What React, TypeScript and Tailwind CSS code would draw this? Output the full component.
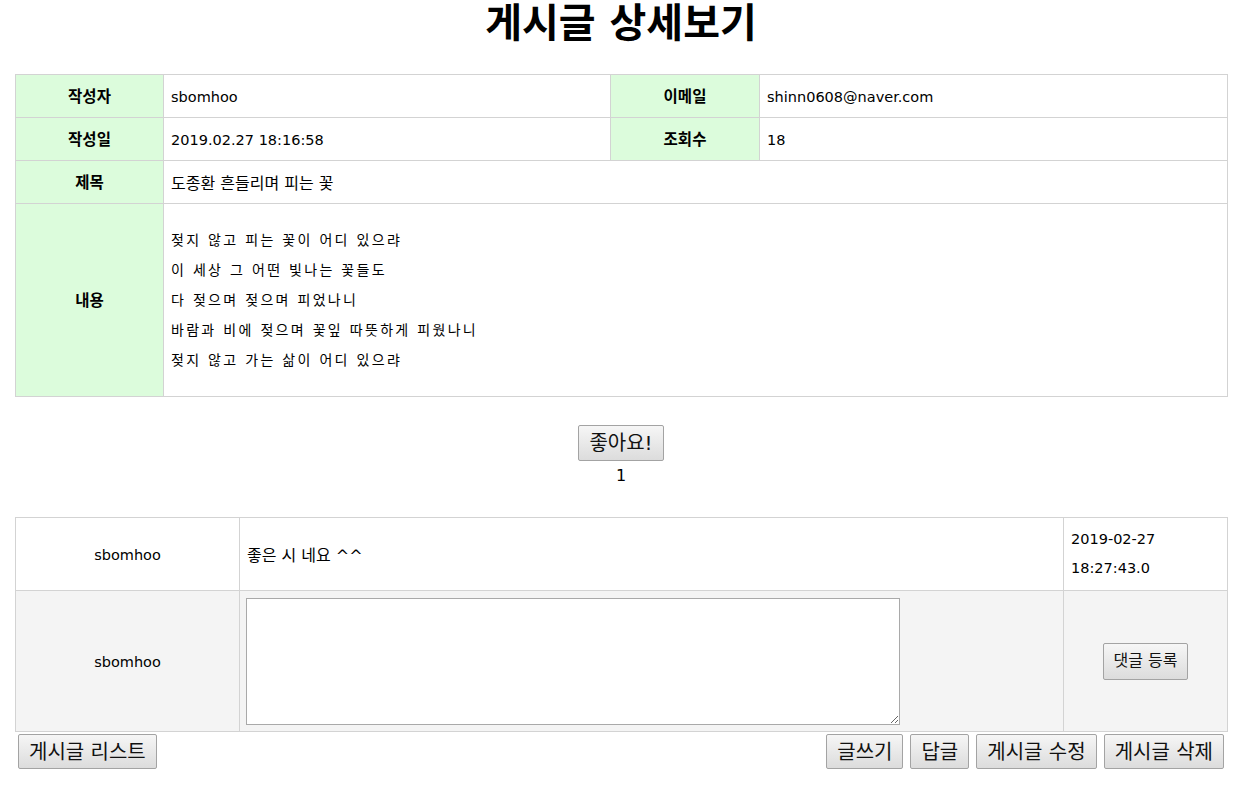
const font = '[font-family:"DejaVu_Sans","Noto_Sans_CJK_KR",sans-serif]'

const lines = [
  '젖지 않고 피는 꽃이 어디 있으랴',
  '이 세상 그 어떤 빛나는 꽃들도',
  '다 젖으며 젖으며 피었나니',
  '바람과 비에 젖으며 꽃잎 따뜻하게 피웠나니',
  '젖지 않고 가는 삶이 어디 있으랴',
]

const btn =
  'border border-[#a3a3a3] rounded-[2px] bg-gradient-to-b from-[#f6f6f6] to-[#dcdcdc] text-[#111] leading-none'

function Label({ children }: { children: React.ReactNode }) {
  return (
    <td className="border border-[#d3d3d3] bg-[#dcfcdc] pt-[4px] text-center font-bold text-[15.5px] text-black">
      {children}
    </td>
  )
}

function Value({ children, colSpan, ko }: { children: React.ReactNode; colSpan?: number; ko?: boolean }) {
  return (
    <td
      colSpan={colSpan}
      className={`border border-[#d3d3d3] px-[7px] pt-[4px] text-black ${ko ? 'text-[16px]' : 'text-[14.5px]'}`}
    >
      {children}
    </td>
  )
}

export default function App() {
  return (
    <div className={`min-h-screen w-[1242px] bg-white ${font}`}>
      {/* Title */}
      <div className="h-[74px] pt-[1px] text-center">
        <h1 className="text-[40px] font-bold leading-[44px] text-black">게시글 상세보기</h1>
      </div>

      {/* Post detail */}
      <table className="ml-[15px] w-[1212px] border-collapse table-fixed">
        <colgroup>
          <col className="w-[148px]" />
          <col className="w-[447px]" />
          <col className="w-[149px]" />
          <col className="w-[468px]" />
        </colgroup>
        <tbody>
          <tr className="h-[43px]">
            <Label>작성자</Label>
            <Value>sbomhoo</Value>
            <Label>이메일</Label>
            <Value>shinn0608@naver.com</Value>
          </tr>
          <tr className="h-[43px]">
            <Label>작성일</Label>
            <Value>2019.02.27 18:16:58</Value>
            <Label>조회수</Label>
            <Value>18</Value>
          </tr>
          <tr className="h-[43px]">
            <Label>제목</Label>
            <Value colSpan={3} ko>
              도종환 흔들리며 피는 꽃
            </Value>
          </tr>
          <tr className="h-[193px]">
            <Label>내용</Label>
            <td
              colSpan={3}
              className="border border-[#d3d3d3] px-[7px] text-[14px] leading-[30px] tracking-[2.3px] text-black"
            >
              {lines.map((l) => (
                <div key={l}>{l}</div>
              ))}
            </td>
          </tr>
        </tbody>
      </table>

      {/* Like */}
      <div className="flex flex-col items-center pt-[28px]">
        <button className={`${btn} h-[36px] px-[10px] text-[20px]`}>좋아요!</button>
        <div className="mt-[6px] text-[16px] font-medium leading-[18px] text-black">1</div>
      </div>

      {/* Comments */}
      <table className="mt-[32px] ml-[15px] w-[1212px] border-collapse table-fixed">
        <colgroup>
          <col className="w-[224px]" />
          <col className="w-[824px]" />
          <col className="w-[164px]" />
        </colgroup>
        <tbody>
          <tr className="h-[73px]">
            <td className="border border-[#d3d3d3] pt-[3px] text-center text-[14.5px] text-black">sbomhoo</td>
            <td className="border border-[#d3d3d3] px-[7px] pt-[3px] text-[16px] text-black">좋은 시 네요 ^^</td>
            <td className="border border-[#d3d3d3] px-[7px] text-[14.5px] leading-[29px] text-black">
              <div>2019-02-27</div>
              <div>18:27:43.0</div>
            </td>
          </tr>
          <tr className="h-[141px] bg-[#f4f4f4]">
            <td className="border border-[#d3d3d3] pt-[3px] text-center text-[14.5px] text-black">sbomhoo</td>
            <td className="border border-[#d3d3d3] px-[6px] align-middle">
              <textarea className="block h-[127px] w-[654px] border border-[#a9a9a9] bg-white" />
            </td>
            <td className="border border-[#d3d3d3] text-center">
              <button className={`${btn} h-[37px] px-[10px] text-[16px]`}>댓글 등록</button>
            </td>
          </tr>
        </tbody>
      </table>

      {/* Actions */}
      <div className="ml-[18px] mt-[2px] flex w-[1206px] items-start justify-between">
        <button className={`${btn} h-[35px] px-[10px] text-[20px]`}>게시글 리스트</button>
        <div className="flex gap-[7px]">
          <button className={`${btn} h-[35px] px-[10px] text-[20px]`}>글쓰기</button>
          <button className={`${btn} h-[35px] px-[10px] text-[20px]`}>답글</button>
          <button className={`${btn} h-[35px] px-[10px] text-[20px]`}>게시글 수정</button>
          <button className={`${btn} h-[35px] px-[10px] text-[20px]`}>게시글 삭제</button>
        </div>
      </div>
    </div>
  )
}
